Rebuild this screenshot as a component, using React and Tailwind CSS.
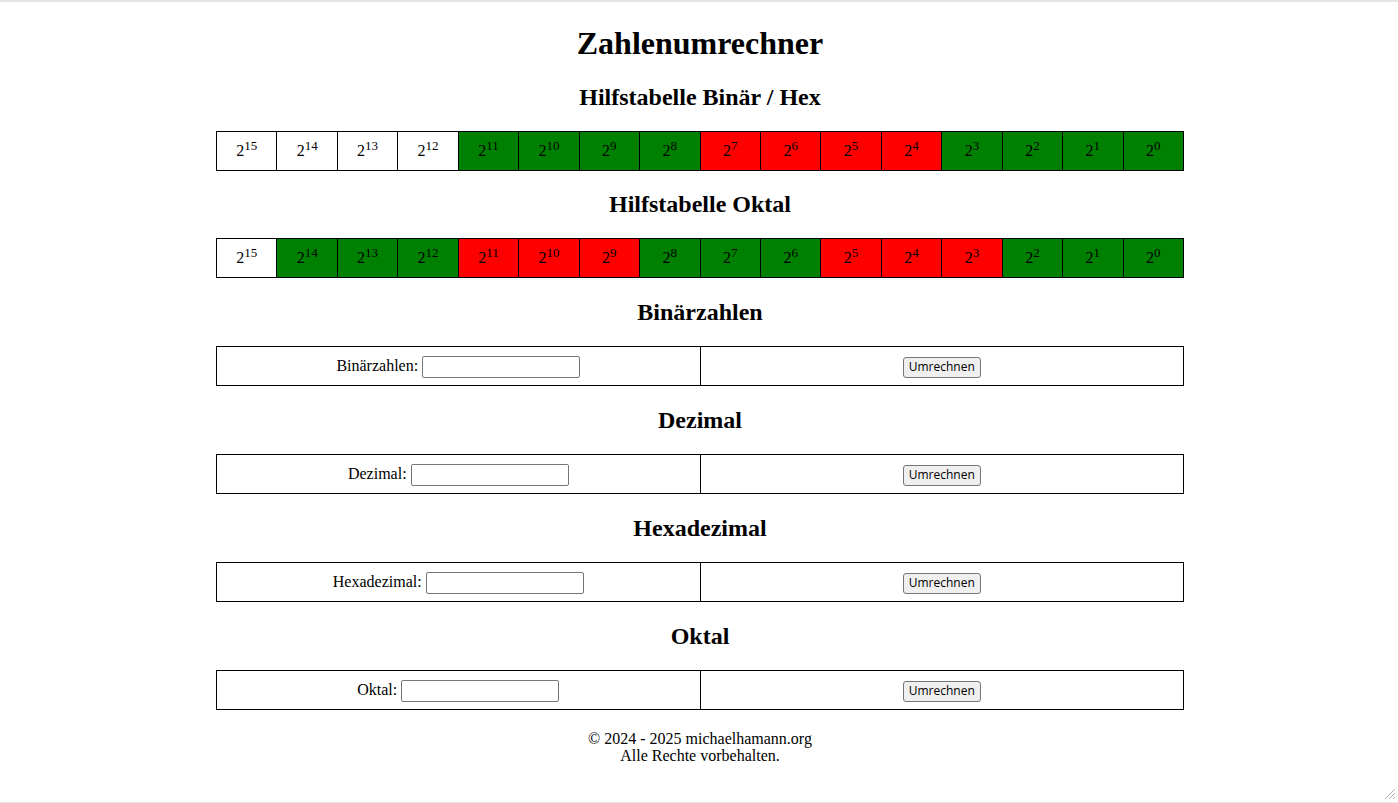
import React from "react";

const binColors = [
  "w", "w", "w", "w",
  "g", "g", "g", "g",
  "r", "r", "r", "r",
  "g", "g", "g", "g",
];

const oktColors = [
  "w",
  "g", "g", "g",
  "r", "r", "r",
  "g", "g", "g",
  "r", "r", "r",
  "g", "g", "g",
];

const cellBg = (c) => {
  if (c === "g") return "bg-[#008000]";
  if (c === "r") return "bg-[#ff0000]";
  return "bg-white";
};

function PowerTable({ colors }) {
  return (
    <table className="mx-auto w-[968px] table-fixed border-collapse">
      <tbody>
        <tr className="h-[39px]">
          {colors.map((c, i) => (
            <td
              key={i}
              className={`border border-black text-center align-middle text-[16px] ${cellBg(c)}`}
            >
              2<sup className="text-[13px] top-[-0.5em]">{15 - i}</sup>
            </td>
          ))}
        </tr>
      </tbody>
    </table>
  );
}

function ConvertRow({ label }) {
  return (
    <table className="mx-auto w-[968px] table-fixed border-collapse">
      <tbody>
        <tr className="h-[39px]">
          <td className="border border-black text-center align-middle text-[16px]">
            <label>{label}: </label>
            <input
              type="text"
              className="h-[22px] w-[158px] rounded-[2px] border border-[#767676] bg-white px-[2px] align-middle"
            />
          </td>
          <td className="border border-black text-center align-middle">
            <button className="h-[21px] rounded-[3px] border border-[#767676] bg-[#efefef] px-[5px] align-middle font-['Open_Sans',sans-serif] text-[12px] leading-none text-black">
              Umrechnen
            </button>
          </td>
        </tr>
      </tbody>
    </table>
  );
}

function Heading({ children, top = "mt-[20px]" }) {
  return (
    <h2
      className={`${top} mb-[20px] h-[28px] text-center text-[24px] font-bold leading-[28px]`}
    >
      {children}
    </h2>
  );
}

export default function App() {
  return (
    <div className="relative h-[803px] overflow-hidden border-t-2 border-b border-[#e4e4e4] bg-white pl-[2px] pt-[23px] font-['Liberation_Serif',serif] text-black">
      <h1 className="h-[37px] text-center text-[32px] font-bold leading-[37px]">
        Zahlenumrechner
      </h1>

      <Heading top="mt-[21px]">Hilfstabelle Binär / Hex</Heading>
      <PowerTable colors={binColors} />

      <Heading top="mt-[19px]">Hilfstabelle Oktal</Heading>
      <PowerTable colors={oktColors} />

      <Heading>Binärzahlen</Heading>
      <ConvertRow label="Binärzahlen" />

      <Heading>Dezimal</Heading>
      <ConvertRow label="Dezimal" />

      <Heading>Hexadezimal</Heading>
      <ConvertRow label="Hexadezimal" />

      <Heading>Oktal</Heading>
      <ConvertRow label="Oktal" />

      {/* Footer */}
      <footer className="mt-[20px] text-center text-[16px] leading-[17px]">
        <p>© 2024 - 2025 michaelhamann.org</p>
        <p>Alle Rechte vorbehalten.</p>
      </footer>

      {/* resize grip */}
      <svg
        className="absolute bottom-[2px] right-[2px]"
        width="12"
        height="12"
        viewBox="0 0 12 12"
      >
        <line x1="11" y1="1" x2="1" y2="11" stroke="#b0b0b0" strokeWidth="1" />
        <line x1="11" y1="5" x2="5" y2="11" stroke="#b0b0b0" strokeWidth="1" />
        <line x1="11" y1="9" x2="9" y2="11" stroke="#b0b0b0" strokeWidth="1" />
      </svg>
    </div>
  );
}
